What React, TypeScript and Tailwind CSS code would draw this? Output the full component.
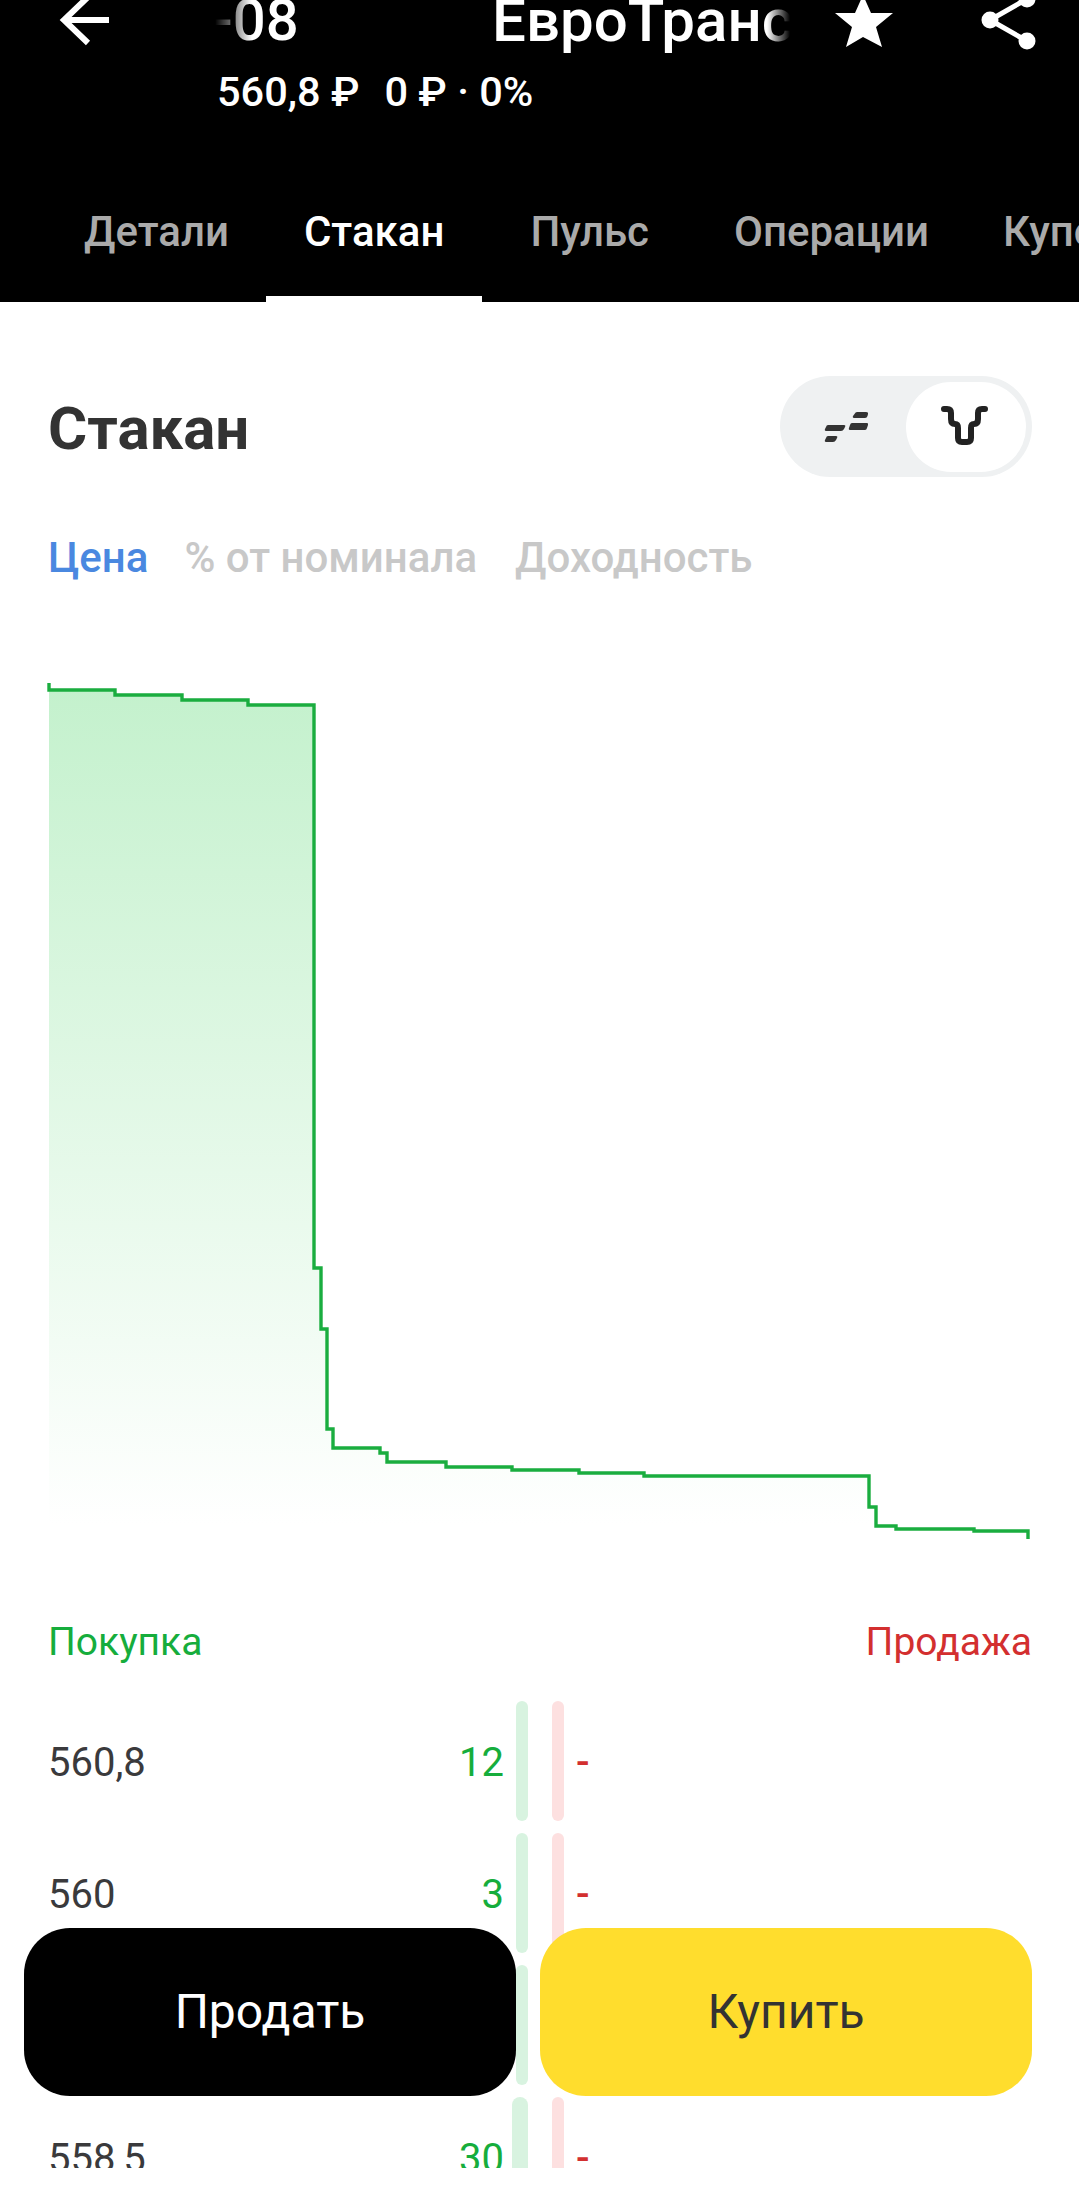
const tabs = [
    { name: "Детали", cls: "ml-[46px] text-[#aaaaaa]" },
    { name: "Стакан", cls: "-ml-[1px] text-white border-b-[6px] border-white" },
    { name: "Пульс", cls: "ml-[10px] text-[#aaaaaa]" },
    { name: "Операции", cls: "ml-[9px] text-[#aaaaaa]" },
    { name: "Купоны", cls: "-ml-[2px] text-[#aaaaaa]" },
]

const rows = [
    { price: "560,8", qty: "12", bar: "w-[12px]" },
    { price: "560", qty: "3", bar: "w-[12px]" },
    { price: "559,9", qty: "5", bar: "w-[12px]" },
    { price: "558,5", qty: "30", bar: "w-[16px]" },
]

const linePath = "M49 683V690H115V695H182V700H248V705H314V1268H321V1329H327V1429H333V1448H380V1453H387V1462H446V1467H512V1470H579V1473H644V1476H869V1507H876V1526H896V1529H974V1531H1028V1539"
const areaPath = linePath + "H49Z"

const DepthChart = () => (
    <svg className="block mt-[94px] w-[1079px] h-[880px]" viewBox="0 680 1079 880" fill="none">
        <defs>
            <linearGradient id="depthFill" gradientUnits="userSpaceOnUse" x1="0" y1="690" x2="0" y2="1525">
                <stop offset="0" stopColor="#c4f1cd" />
                <stop offset="1" stopColor="#ffffff" />
            </linearGradient>
        </defs>
        <path d={areaPath} fill="url(#depthFill)" />
        <path d={linePath} stroke="#1aad3f" strokeWidth="3.4" />
    </svg>
)

const Header = () => (
    <div className="relative h-[302px] bg-black overflow-hidden">
        <div className="flex items-start h-[62px]">
            <svg className="ml-[57px] w-[56px] h-[48px] shrink-0" viewBox="0 0 56 48" fill="none" stroke="white" strokeWidth="6">
                <path d="M7 20H52M31 -3L7 20L31 43" />
            </svg>
            <div className="ml-[102px] w-[575px] shrink-0 h-[62px] flex overflow-hidden text-[58px] leading-[41px] font-medium text-white [mask-image:linear-gradient(to_right,transparent_0,black_37px,black_552px,transparent_575px)]">
                <span className="shrink-0 w-[279px] -ml-[2px]">-08</span>
                <span className="shrink-0 text-[60px]">ЕвроТранс выпуск</span>
            </div>
            <svg className="ml-[40px] w-[64px] h-[50px] shrink-0" viewBox="0 0 64 50" fill="white">
                <path d="M33 -5L41 13H63L46 27L52 47L33 37L16 47L22 27L5 13H25Z" />
            </svg>
            <svg className="ml-[87px] w-[60px] h-[54px] shrink-0" viewBox="0 0 60 54" fill="white" stroke="white">
                <path d="M46 -1L9 20L46 41" fill="none" strokeWidth="5" />
                <circle cx="46" cy="-1" r="8.500" strokeWidth="0" />
                <circle cx="9" cy="20" r="8.500" strokeWidth="0" />
                <circle cx="46" cy="41" r="8.500" strokeWidth="0" />
            </svg>
        </div>
        <div className="ml-[217px] mt-[6px] flex text-[41.5px] leading-[48px] font-medium text-white">
            <span>560,8 ₽</span>
            <span className="ml-[25px]">0 ₽ · 0%</span>
        </div>
        <div className="mt-[67px] flex text-[42px] font-medium whitespace-nowrap">
            {tabs.map((tab) => (
                <div key={tab.name} className={`h-[119px] px-[38px] pt-[25px] leading-[48px] shrink-0 ${tab.cls}`}>{tab.name}</div>
            ))}
        </div>
    </div>
)

const Toggle = () => (
    <div className="flex justify-end items-center w-[252px] h-[101px] pr-[6px] rounded-full bg-[#eff1f2] relative">
        <svg className="absolute left-[40px] top-[31px] w-[56px] h-[40px]" viewBox="0 0 56 40" fill="#333333">
            <path d="M8 18H24Q26 18 25 20L24 22Q23 24 21 24H7Q4 24 5 22L6 20Q6.500 18 8 18ZM8 29H16Q18 29 17 31L16 33Q15 35 13 35H7Q4 35 5 33L6 31Q6.500 29 8 29ZM32 16H47Q48.500 16 48 18L47 21Q46.500 23 45 23H31Q28 23 29 21L30 18Q30.500 16 32 16ZM37 5H46Q48.500 5 48 7L47.500 9Q47 11 45 11H35Q32 11 33 9L34.500 7Q35.500 5 37 5Z" />
        </svg>
        <div className="w-[120px] h-[90px] rounded-full bg-white flex items-center justify-center">
            <svg className="w-[52px] h-[42px]" viewBox="0 0 52 42" fill="none" stroke="#222222" strokeWidth="6" strokeLinejoin="round" strokeLinecap="round">
                <path d="M4 3H7Q11 3 11 7V13Q11 18 15 18Q18 18 18 22V32Q18 36 22 36H27Q31 36 31 32V22Q31 18 34 18Q38 18 38 13V7Q38 3 42 3H45" />
            </svg>
        </div>
    </div>
)

const Row = ({ price, qty, bar }: { price: string; qty: string; bar: string }) => (
    <div className="flex items-center h-[120px] mb-[12px] pl-[48px] text-[40px]">
        <div className="w-[456px] shrink-0 pt-[4px] flex justify-between items-center text-[#3a3a3c]">
            <span>{price}</span>
            <span className="text-[#16ad3c]">{qty}</span>
        </div>
        <div className="w-[24px] h-full flex justify-end shrink-0">
            <div className={`${bar} h-full rounded-full bg-[#d8f3e0]`} />
        </div>
        <div className="ml-[24px] w-[12px] h-full rounded-full bg-[#fde0e0] shrink-0" />
        <span className="ml-[12px] pt-[4px] font-medium text-[#d32f2f]">-</span>
    </div>
)

export default function App() {
    return (
        <div className="relative w-[1079px] h-[2185px] bg-white overflow-hidden font-['Roboto',sans-serif]">
            <div className="h-[2168px] overflow-hidden">
                <Header />
                <div className="flex justify-between items-center pl-[48px] pr-[47px] mt-[74px]">
                    <h1 className="text-[60px] leading-[101px] font-bold text-[#333333] relative top-[2px]">Стакан</h1>
                    <Toggle />
                </div>
                <div className="flex mt-[53px] pl-[48px] text-[42px] leading-[56px] font-medium text-[#c8c8c8]">
                    <span className="text-[#4a88e0]">Цена</span>
                    <span className="ml-[36px]">% от номинала</span>
                    <span className="ml-[38px]">Доходность</span>
                </div>
                <DepthChart />
                <div className="flex justify-between pr-[47px] pl-[48px] mt-[58px] text-[39px] leading-[48px]">
                    <span className="text-[#16ad3c]">Покупка</span>
                    <span className="text-[#d32f2f]">Продажа</span>
                </div>
                <div className="mt-[35px]">
                    {rows.map((row) => (
                        <Row key={row.price} {...row} />
                    ))}
                </div>
            </div>
            <div className="absolute left-[24px] top-[1928px] w-[1008px] flex gap-[24px] text-[48px]">
                <button className="w-[492px] h-[168px] rounded-[46px] bg-black text-white">Продать</button>
                <button className="w-[492px] h-[168px] rounded-[46px] bg-[#ffdd2d] text-[#333333]">Купить</button>
            </div>
        </div>
    )
}
